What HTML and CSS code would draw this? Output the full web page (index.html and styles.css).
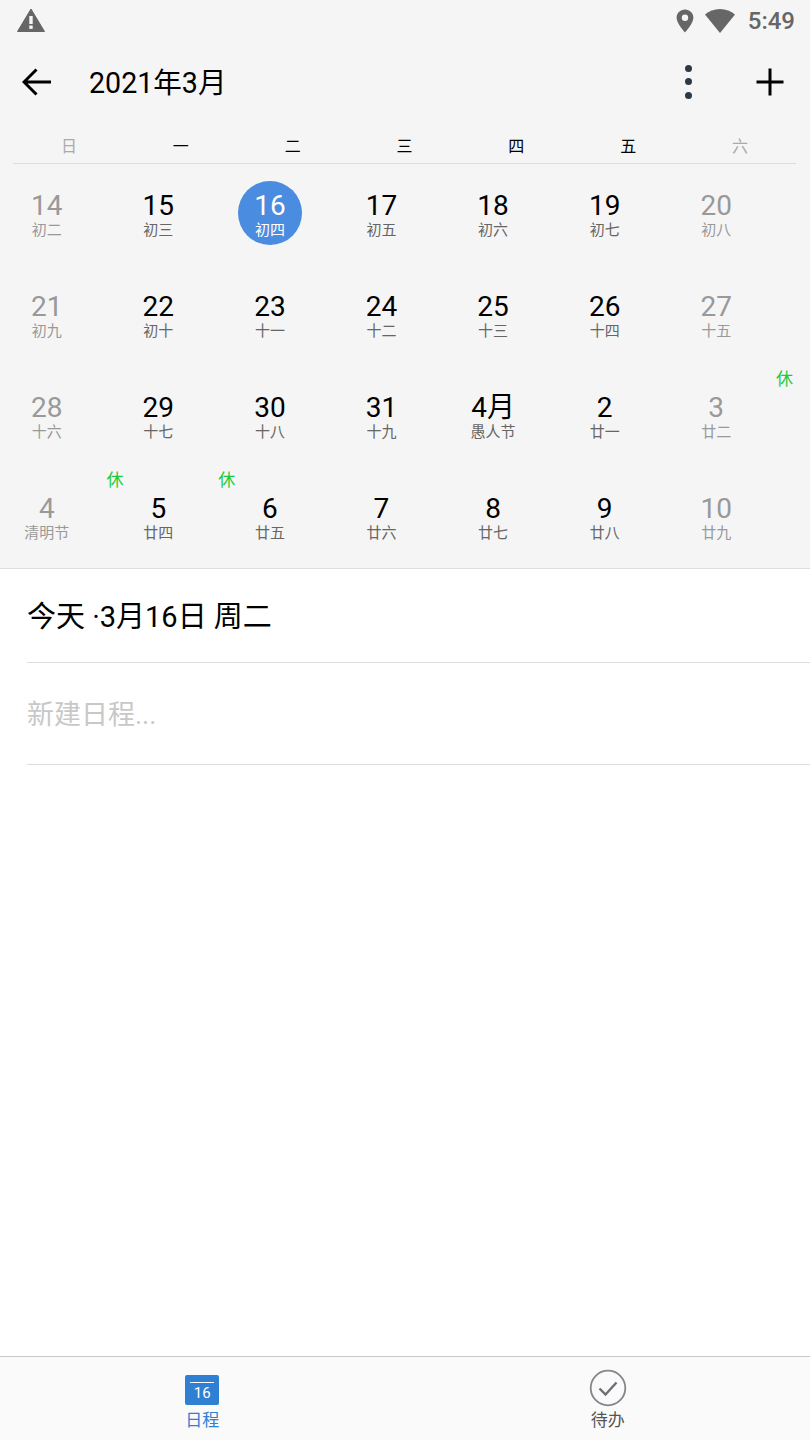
FILE: index.html
```html
<!DOCTYPE html>
<html lang="zh-CN">
<head>
    <meta charset="UTF-8">
    <meta name="viewport" content="width=device-width, initial-scale=1.0">
    <title>日程</title>
    <link rel="stylesheet" href="styles.css">
</head>
<body>
    <div class="calendar-head">
        <div class="status-bar">
            <svg class="icon-warning" width="28" height="24" viewBox="0 0 28 24">
                <path d="M14 1 L27.5 23.5 H0.5 Z" fill="#666" stroke="#666" stroke-linejoin="round"/>
                <rect x="12.3" y="8" width="3.4" height="8" fill="#f5f5f5"/>
                <rect x="12.3" y="17.5" width="3.4" height="3.4" fill="#f5f5f5"/>
            </svg>
            <div class="status-right">
                <svg width="18" height="24" viewBox="0 0 18 24">
                    <path fill-rule="evenodd" fill="#666" d="M9 0.5 C4.2 0.5 0.6 4.1 0.6 8.8 C0.6 14.5 9 23.5 9 23.5 C9 23.5 17.4 14.5 17.4 8.8 C17.4 4.1 13.8 0.5 9 0.5 Z M9 5.6 A3.2 3.2 0 1 1 9 12 A3.2 3.2 0 1 1 9 5.6 Z"/>
                </svg>
                <svg class="icon-wifi" width="30" height="24" viewBox="0 0 30 24">
                    <path fill="#666" d="M15 24 L0 5.5 C4 2.2 9.3 0 15 0 C20.7 0 26 2.2 30 5.5 Z"/>
                </svg>
                <span class="clock">5:49</span>
            </div>
        </div>

        <div class="toolbar">
            <svg class="icon-back" width="30" height="28" viewBox="0 0 30 28">
                <path d="M29 14 H3 M14.5 1.5 L2 14 L14.5 26.5" fill="none" stroke="#000" stroke-width="3"/>
            </svg>
            <div class="toolbar-title">2021年3月</div>
            <div class="dots">
                <span></span>
                <span></span>
                <span></span>
            </div>
            <svg class="icon-plus" width="28" height="28" viewBox="0 0 28 28">
                <path d="M0.5 14 H27.5 M14 0.5 V27.5" fill="none" stroke="#000" stroke-width="3"/>
            </svg>
        </div>

        <div class="weekdays">
            <div class="off">日</div>
            <div>一</div>
            <div>二</div>
            <div>三</div>
            <div>四</div>
            <div>五</div>
            <div class="off">六</div>
        </div>

        <div class="days">
            <div class="day off"><b>14</b><small>初二</small></div>
            <div class="day"><b>15</b><small>初三</small></div>
            <div class="day selected"><b>16</b><small>初四</small></div>
            <div class="day"><b>17</b><small>初五</small></div>
            <div class="day"><b>18</b><small>初六</small></div>
            <div class="day"><b>19</b><small>初七</small></div>
            <div class="day off"><b>20</b><small>初八</small></div>

            <div class="day off"><b>21</b><small>初九</small></div>
            <div class="day"><b>22</b><small>初十</small></div>
            <div class="day"><b>23</b><small>十一</small></div>
            <div class="day"><b>24</b><small>十二</small></div>
            <div class="day"><b>25</b><small>十三</small></div>
            <div class="day"><b>26</b><small>十四</small></div>
            <div class="day off"><b>27</b><small>十五</small></div>

            <div class="day off"><b>28</b><small>十六</small></div>
            <div class="day"><b>29</b><small>十七</small></div>
            <div class="day"><b>30</b><small>十八</small></div>
            <div class="day"><b>31</b><small>十九</small></div>
            <div class="day"><b>4月</b><small>愚人节</small></div>
            <div class="day"><b>2</b><small>廿一</small></div>
            <div class="day off"><b>3</b><small>廿二</small><i class="rest">休</i></div>

            <div class="day off"><b>4</b><small>清明节</small></div>
            <div class="day"><b>5</b><small>廿四</small><i class="rest left">休</i></div>
            <div class="day"><b>6</b><small>廿五</small><i class="rest left">休</i></div>
            <div class="day"><b>7</b><small>廿六</small></div>
            <div class="day"><b>8</b><small>廿七</small></div>
            <div class="day"><b>9</b><small>廿八</small></div>
            <div class="day off"><b>10</b><small>廿九</small></div>
        </div>
    </div>

    <div class="agenda">
        <div class="agenda-row today">今天 ·3月16日 周二</div>
        <div class="agenda-row new-item">新建日程...</div>
    </div>

    <nav class="tabs">
        <a href="#" class="tab active">
            <span class="cal-icon">16</span>
            日程
        </a>
        <a href="#" class="tab">
            <svg width="38" height="38" viewBox="0 0 38 38">
                <circle cx="19" cy="19" r="17.3" fill="none" stroke="#85858c" stroke-width="1.8"/>
                <path d="M10.5 19.5 L16.5 25.5 L27.5 13.5" fill="none" stroke="#6e6e76" stroke-width="2.4"/>
            </svg>
            待办
        </a>
    </nav>
</body>
</html>
```

FILE: styles.css
```css
* {
    box-sizing: border-box;
}

body {
    margin: 0;
    height: 1440px;
    overflow: hidden;
    display: flex;
    flex-direction: column;
    background-color: #fff;
    color: #000;
    font-family: Roboto, "Noto Sans CJK SC", sans-serif;
}

.calendar-head {
    height: 569px;
    background-color: #f5f5f5;
    border-bottom: 1px solid #dedede;
}

.status-bar {
    height: 41px;
    padding: 0 15px 0 17px;
    display: flex;
    justify-content: space-between;
    align-items: center;
}

.icon-warning {
    margin-top: -2px;
}

.status-right {
    display: flex;
    align-items: center;
    gap: 11px;
}

.clock {
    margin-left: 2px;
    font-size: 24px;
    font-weight: 500;
    color: #666;
}

.toolbar {
    height: 81px;
    padding: 0 26px 0 22px;
    display: flex;
    align-items: center;
}

.toolbar-title {
    flex: 1;
    margin-left: 37px;
    padding-bottom: 3px;
    font-size: 28.6px;
}

.dots {
    margin-right: 64px;
    display: flex;
    flex-direction: column;
    gap: 6.5px;
}

.dots span {
    width: 7px;
    height: 7px;
    border-radius: 50%;
    background-color: #2c3a47;
}

.weekdays {
    height: 42px;
    margin: 0 14px 0 13px;
    padding-top: 4px;
    display: grid;
    grid-template-columns: repeat(7, 1fr);
    align-items: center;
    text-align: center;
    font-size: 16px;
    border-bottom: 1px solid #dcdcdc;
}

.weekdays .off {
    color: #aaa;
}

.days {
    width: 781px;
    margin-left: -9px;
    display: grid;
    grid-template-columns: repeat(7, 1fr);
    grid-auto-rows: 101px;
}

.day {
    position: relative;
    display: flex;
    flex-direction: column;
    align-items: center;
    padding-top: 22px;
}

.day b {
    font-size: 28px;
    font-weight: 400;
    line-height: 40px;
}

.day small {
    margin-top: -7px;
    font-size: 15px;
    line-height: 22px;
    color: #666;
}

.day.off b {
    color: #999;
}

.day.off small {
    color: #999;
}

.day.selected::before {
    content: "";
    position: absolute;
    top: 17px;
    left: calc(50% - 32px);
    width: 64px;
    height: 64px;
    border-radius: 50%;
    background-color: #4a8ce0;
}

.day.selected b,
.day.selected small {
    position: relative;
    color: #fff;
}

.rest {
    position: absolute;
    top: 1px;
    right: -21px;
    font-size: 17px;
    font-style: normal;
    line-height: 24px;
    color: #1ec93c;
}

.rest.left {
    right: auto;
    left: 4px;
}

.agenda {
    flex: 1;
    padding-left: 27px;
}

.agenda-row {
    display: flex;
    align-items: center;
    border-bottom: 1px solid #dedede;
}

.today {
    height: 94px;
    padding-bottom: 4px;
    font-size: 29px;
}

.new-item {
    height: 102px;
    padding-bottom: 2px;
    font-size: 27px;
    color: #c8c8c8;
}

.tabs {
    height: 84px;
    display: flex;
    background-color: #fafafa;
    border-top: 1px solid #c8c8c8;
}

.tab {
    flex: 1;
    padding-top: 12px;
    display: flex;
    flex-direction: column;
    align-items: center;
    gap: 2px;
    font-size: 17px;
    line-height: 24px;
    color: #555;
    text-decoration: none;
}

.tab svg {
    margin-bottom: -1px;
}

.tab.active {
    padding-top: 18px;
    padding-right: 1px;
    gap: 3px;
    color: #2f7fd3;
}

.cal-icon {
    position: relative;
    width: 34px;
    height: 30px;
    padding-top: 7px;
    border-radius: 2px;
    background-color: #2f7fd3;
    color: #fff;
    font-size: 15px;
    line-height: 22px;
    text-align: center;
}

.cal-icon::before {
    content: "";
    position: absolute;
    top: 7px;
    left: 5px;
    right: 5px;
    height: 1px;
    background-color: #fff;
}
```
